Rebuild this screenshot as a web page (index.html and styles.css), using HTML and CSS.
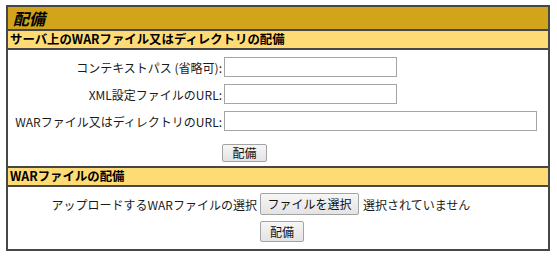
FILE: index.html
```
<!DOCTYPE html>
<html lang="ja">
<head>
<meta charset="utf-8">
<title>配備</title>
<link rel="stylesheet" href="styles.css">
</head>
<body>
<div class="panel">
  <div class="title">配備</div>
  <div class="subhead">サーバ上のWARファイル又はディレクトリの配備</div>
  <form class="form1">
    <label class="lbl" for="p">コンテキストパス (省略可):</label>
    <input id="p" class="txt short" type="text">
    <label class="lbl" for="x">XML設定ファイルのURL:</label>
    <input id="x" class="txt short" type="text">
    <label class="lbl" for="w">WARファイル又はディレクトリのURL:</label>
    <input id="w" class="txt long" type="text">
    <span class="spacer"></span>
    <button type="button" class="btn btn1">配備</button>
  </form>
  <div class="subhead">WARファイルの配備</div>
  <form class="form2">
    <span class="lbl">アップロードするWARファイルの選択</span>
    <span class="file"><button type="button" class="btn file-btn">ファイルを選択</button><span class="none">選択されていません</span></span>
    <span class="spacer"></span>
    <button type="button" class="btn btn2">配備</button>
  </form>
</div>
</body>
</html>
```
FILE: styles.css
```
html, body {
  margin: 0;
  padding: 0;
  background: #fff;
}
body {
  font-family: "Noto Sans CJK JP", "Noto Sans", sans-serif;
  font-size: 12px;
  color: #1a1a1a;
}
.panel {
  margin: 5px 0 0 6px;
  width: 544px;
  box-sizing: border-box;
  border: 2px solid #474747;
}
.title {
  height: 22px;
  box-sizing: border-box;
  background: #d2a41c;
  font-size: 16px;
  font-weight: bold;
  font-style: italic;
  line-height: 22px;
  padding-left: 5px;
  color: #000;
}
.subhead {
  height: 21px;
  box-sizing: border-box;
  border-top: 2px solid #474747;
  border-bottom: 2px solid #474747;
  background: #ffdb75;
  font-size: 12.4px;
  font-weight: bold;
  line-height: 17px;
  padding-left: 2px;
  color: #000;
}
.form1 {
  margin: 0;
  height: 116px;
  box-sizing: border-box;
  display: grid;
  grid-template-columns: 214px auto;
  column-gap: 2px;
  row-gap: 7px;
  align-items: center;
  align-content: start;
  padding-top: 7px;
}
.form2 {
  margin: 0;
  height: 62px;
  box-sizing: border-box;
  display: grid;
  grid-template-columns: 249px auto;
  column-gap: 3px;
  row-gap: 6px;
  align-items: center;
  align-content: start;
  padding-top: 6px;
}
.lbl {
  text-align: right;
  white-space: nowrap;
}
.txt {
  height: 20px;
  box-sizing: border-box;
  border: 1px solid #a5a5a5;
  background: #fff;
  margin: 0;
  padding: 0 2px;
  font: inherit;
}
.short { width: 173px; }
.long { width: 313px; }
.btn {
  margin: 0;
  box-sizing: border-box;
  font: inherit;
  color: #111;
  background: linear-gradient(#f6f6f6, #e3e3e3);
  border: 1px solid #a3a3a3;
  border-radius: 2px;
  padding: 0;
  line-height: 1;
}
.btn1 {
  width: 45px;
  height: 18px;
  margin-top: 6px;
  margin-left: -2px;
  justify-self: start;
}
.btn2 {
  width: 44px;
  height: 21px;
  justify-self: start;
}
.file {
  display: flex;
  align-items: center;
  gap: 4px;
}
.file-btn {
  width: 99px;
  height: 22px;
}
.none {
  white-space: nowrap;
}
```
